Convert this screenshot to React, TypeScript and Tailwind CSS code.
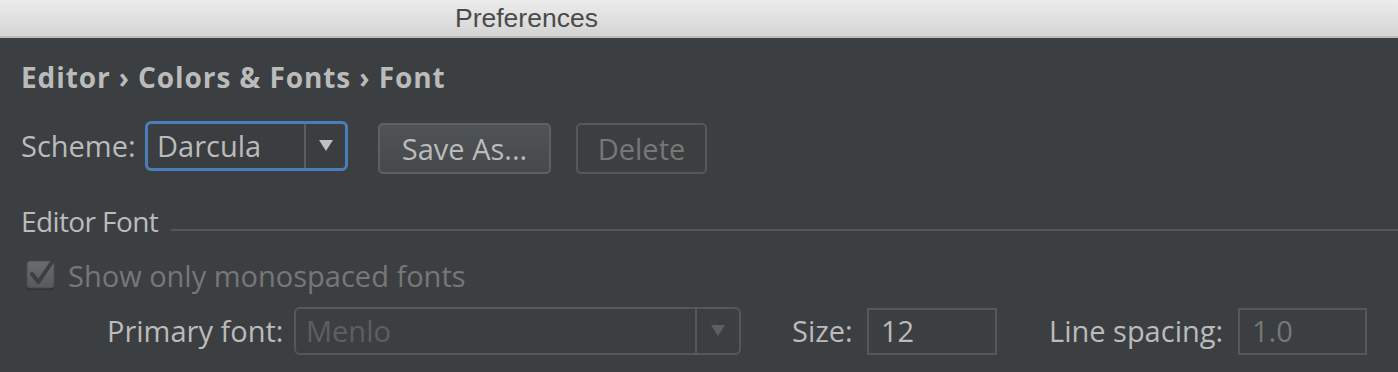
import React from "react";

function Arrow({ color }: { color: string }) {
  return (
    <svg width="14" height="12" viewBox="0 0 14 12">
      <polygon points="0,0 14,0 7,11" fill={color} />
    </svg>
  );
}

function CheckBox() {
  return (
    <svg width="30" height="32" viewBox="0 0 30 32">
      <defs>
        <linearGradient id="cb" x1="0" y1="0" x2="0" y2="1">
          <stop offset="0" stopColor="#6a6c6d" />
          <stop offset="1" stopColor="#58595a" />
        </linearGradient>
      </defs>
      <rect x="1" y="3" width="27" height="27" rx="3" fill="#2f3132" />
      <rect x="1" y="1" width="27" height="27" rx="3" fill="url(#cb)" stroke="#4a4c4d" strokeWidth="1" />
      <path d="M6 14 L12.5 22 L26 2" fill="none" stroke="#3c3e3f" strokeWidth="4" strokeLinecap="round" strokeLinejoin="round" />
    </svg>
  );
}

export default function App() {
  return (
    <div className="w-[1398px] h-[372px] overflow-hidden bg-[#3c3f41] font-['Open_Sans',sans-serif] text-[#bbbbbb] text-[29px]">
      {/* title bar */}
      <div className="h-[38px] bg-gradient-to-b from-[#ececec] to-[#d4d4d4] border-b-2 border-[#bcbcbc] flex items-center pl-[455px]">
        <span className="font-['Liberation_Sans',sans-serif] text-[26.5px] leading-none text-[#4a4a4a]">Preferences</span>
      </div>

      <div className="pl-[21px]">
        {/* breadcrumb */}
        <div className="mt-[19px] h-[40px] flex items-center font-bold text-[28px] tracking-[0.9px] text-[#bbbbbb]">
          Editor › Colors &amp; Fonts › Font
        </div>

        {/* scheme row */}
        <div className="mt-[24px] h-[53px] flex items-start">
          <span className="w-[124px] h-[50px] flex items-center">Scheme:</span>
          <div className="w-[203px] h-[50px] rounded-[6px] border-[3px] border-[#4a7ebb] bg-[#3b3e40] flex items-stretch">
            <div className="flex-1 flex items-center pl-[9px] text-[#bbbbbb]">Darcula</div>
            <div className="w-[41px] border-l-2 border-[#5a5d5f] flex items-center justify-center">
              <Arrow color="#c0c0c0" />
            </div>
          </div>
          <button className="mt-[2px] ml-[30px] w-[173px] h-[51px] rounded-[5px] border-2 border-[#5e6163] bg-gradient-to-b from-[#4f5355] to-[#45494b] text-[#bbbbbb] flex items-center justify-center">
            Save As...
          </button>
          <button className="mt-[2px] ml-[25px] w-[131px] h-[51px] rounded-[5px] border-2 border-[#55585a] text-[#777777] flex items-center justify-center">
            Delete
          </button>
        </div>

        {/* editor font separator */}
        <div className="mt-[27px] h-[40px] flex items-center">
          <span className="w-[150px] shrink-0 text-[28px] tracking-[-0.6px]">Editor Font</span>
          <div className="flex-1 h-[2px] bg-[#545759] mt-[18px]" />
        </div>

        {/* checkbox row */}
        <div className="mt-[15px] h-[40px] flex items-center pl-[5px]">
          <CheckBox />
          <span className="ml-[12px] text-[#777777]">Show only monospaced fonts</span>
        </div>

        {/* primary font row */}
        <div className="mt-[11px] h-[48px] flex items-center">
          <span className="ml-[86px] w-[187px] text-[#bbbbbb]">Primary font:</span>
          <div className="w-[447px] h-[48px] rounded-[6px] border-2 border-[#55585a] flex items-stretch">
            <div className="flex-1 flex items-center pl-[10px] text-[#5c5f61]">Menlo</div>
            <div className="w-[44px] border-l-2 border-[#55585a] flex items-center justify-center">
              <Arrow color="#5c5f61" />
            </div>
          </div>
          <span className="ml-[51px] w-[75px]">Size:</span>
          <div className="w-[130px] h-[47px] border-2 border-[#55585a] flex items-center pl-[12px] text-[#bbbbbb]">
            12
          </div>
          <span className="ml-[52px] w-[189px]">Line spacing:</span>
          <div className="w-[129px] h-[47px] border-2 border-[#55585a] flex items-center pl-[12px] text-[#777777]">
            1.0
          </div>
        </div>
      </div>
    </div>
  );
}
